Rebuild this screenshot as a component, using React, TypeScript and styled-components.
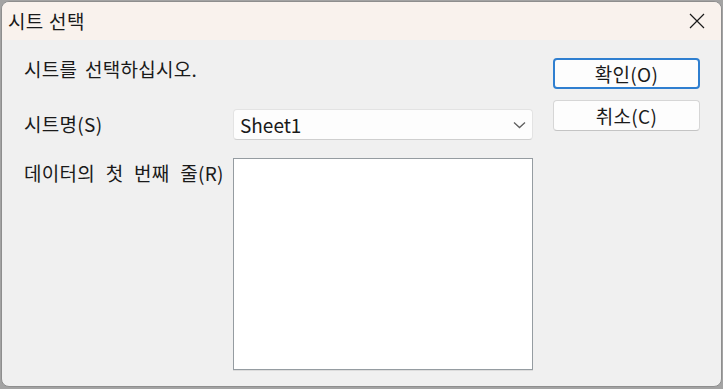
import React from 'react';
import styled, {createGlobalStyle} from "styled-components";

const GlobalStyle = createGlobalStyle`
  html, body {
    margin: 0;
    padding: 0;
    background: #a3a3a3;
  }
  * {
    box-sizing: border-box;
  }
`

const Window = styled.div`
  margin: 1px;
  width: 721px;
  height: 386px;
  border: 1px solid #8e8e8e;
  border-radius: 8px;
  background: #f0f0f0;
  overflow: hidden;
  display: flex;
  flex-direction: column;
  font-family: "Noto Sans CJK KR", "Noto Sans", sans-serif;
  font-size: 19px;
  letter-spacing: 0.3px;
  word-spacing: 6px;
  color: #1a1a1a;
`

const TitleBar = styled.div`
  height: 38px;
  flex: none;
  display: flex;
  align-items: center;
  justify-content: space-between;
  background: #f9f2ed;
  padding-left: 6px;
`

const Title = styled.span`
  line-height: 36px;
  word-spacing: 1px;
`

const CloseButton = styled.button`
  width: 48px;
  height: 38px;
  border: none;
  background: transparent;
  display: flex;
  align-items: center;
  justify-content: center;
  padding: 0;
  color: #1a1a1a;
`

const Body = styled.div`
  flex: 1;
  display: flex;
  gap: 20px;
  padding: 18px 21px 0 22px;
`

const Main = styled.div`
  width: 509px;
  display: flex;
  flex-direction: column;
`

const Message = styled.p`
  margin: -1px 0 28px;
  line-height: 24px;
  word-spacing: 3px;
`

const Form = styled.div`
  display: grid;
  grid-template-columns: 209px 300px;
  row-gap: 18px;
`

const Label = styled.label`
  line-height: 29px;
  white-space: nowrap;
`

const Select = styled.div`
  height: 31px;
  display: flex;
  align-items: center;
  justify-content: space-between;
  padding: 0 6px 0 6px;
  background: #fdfdfd;
  border: 1px solid #e3e3e3;
  border-bottom-color: #cfcfcf;
  border-radius: 4px;
  letter-spacing: 0;
`

const ListBox = styled.div`
  height: 212px;
  background: #ffffff;
  border: 1px solid #959ca1;
  box-shadow: 0 1px 0 #dcdcdc;
`

const Buttons = styled.div`
  width: 147px;
  display: flex;
  flex-direction: column;
  gap: 11px;
`

const Button = styled.button<{primary?: boolean}>`
  height: 31px;
  width: 100%;
  font-family: inherit;
  font-size: inherit;
  letter-spacing: inherit;
  color: #1a1a1a;
  background: #fdfdfd;
  border-radius: 4px;
  border: ${p => p.primary ? "2px solid #2f7fd0" : "1px solid #d6d6d6"};
  ${p => p.primary ? "" : "border-bottom-color: #c4c4c4;"}
  padding: 0;
  line-height: 1;
`

const Chevron = () => (
    <svg width="13" height="8" viewBox="0 0 13 8">
        <path d="M1 1.5 L6.5 6.5 L12 1.5" fill="none" stroke="#5f5f5f" strokeWidth="1.3"/>
    </svg>
)

const CloseIcon = () => (
    <svg width="16" height="16" viewBox="0 0 16 16">
        <path d="M1 1 L15 15 M15 1 L1 15" stroke="#1a1a1a" strokeWidth="1.2"/>
    </svg>
)

const App: React.FC = () => {
    return (
        <>
            <GlobalStyle/>
            <Window>
                <TitleBar>
                    <Title>시트 선택</Title>
                    <CloseButton><CloseIcon/></CloseButton>
                </TitleBar>
                <Body>
                    <Main>
                        <Message>시트를 선택하십시오.</Message>
                        <Form>
                            <Label>시트명(S)</Label>
                            <Select>
                                <span>Sheet1</span>
                                <Chevron/>
                            </Select>
                            <Label>데이터의 첫 번째 줄(R)</Label>
                            <ListBox/>
                        </Form>
                    </Main>
                    <Buttons>
                        <Button primary>확인(O)</Button>
                        <Button>취소(C)</Button>
                    </Buttons>
                </Body>
            </Window>
        </>
    )
}

export default App
